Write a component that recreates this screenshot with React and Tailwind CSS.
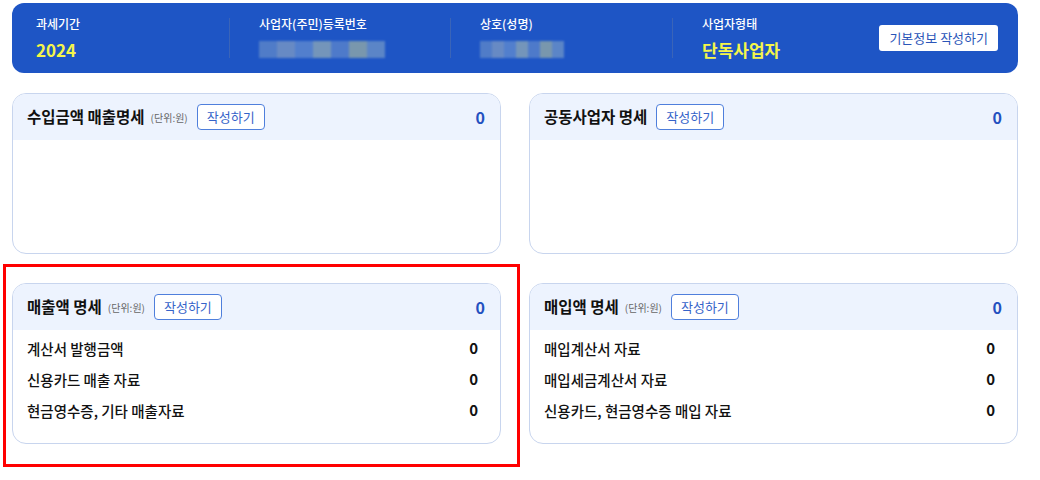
import React from "react";

const font = { fontFamily: '"Noto Sans CJK KR", "Noto Sans", sans-serif' };

const Blur = ({ w }) => (
  <div className={`flex h-[17px] ${w} opacity-80 blur-[1px]`}>
    <div className="flex-1 bg-[#5d86c9]" />
    <div className="flex-1 bg-[#7a98c4]" />
    <div className="flex-1 bg-[#5f8ad0]" />
    <div className="flex-1 bg-[#8aa6b8]" />
    <div className="flex-1 bg-[#5b84cc]" />
    <div className="flex-1 bg-[#90a8a8]" />
    <div className="flex-1 bg-[#6b91c8]" />
  </div>
);

const InfoCol = ({ label, children, w, first }) => (
  <div
    className={`flex h-[40px] shrink-0 flex-col justify-between ${w} ${
      first ? "pl-6" : "border-l border-[#3a64b8] pl-[29px]"
    }`}
  >
    <div className="text-[12px] font-medium leading-none text-white">{label}</div>
    {children}
  </div>
);

const Card = ({ title, unit, total, rows }) => (
  <div className="flex h-[161px] flex-col overflow-hidden rounded-[14px] border border-[#c8d5ee] bg-white">
    <div className="flex h-[46px] shrink-0 items-center bg-[#edf3fe] pl-[14px] pr-[15px]">
      <span className="text-[15.5px] font-bold text-[#111]">{title}</span>
      {unit && <span className="ml-[6px] text-[10px] text-[#666]">(단위:원)</span>}
      <button className="ml-[9px] h-[26px] whitespace-nowrap rounded-[4px] border border-[#4f7fdc] bg-white px-[9px] text-[13px] text-[#3563c9]">
        작성하기
      </button>
      <span className="ml-auto text-[16px] font-bold text-[#2350c0]">{total}</span>
    </div>
    {rows && (
      <div className="flex flex-col pt-[3px]">
        {rows.map((r) => (
          <div key={r} className="flex h-[31px] items-center justify-between pl-[14px] pr-[22px]">
            <span className="text-[14.5px] font-medium text-[#111]">{r}</span>
            <span className="text-[15px] font-bold text-[#111]">0</span>
          </div>
        ))}
      </div>
    )}
  </div>
);

export default function App() {
  return (
    <div className="min-h-[480px] w-[1040px] bg-white pl-3 pt-[3px]" style={font}>
      <div className="flex h-[70px] w-[1006px] items-center rounded-[12px] bg-[#1e55c5] pr-[20px]">
        <InfoCol label="과세기간" w="w-[217px]" first>
          <div className="text-[17px] font-bold leading-none text-[#f4f54a]">2024</div>
        </InfoCol>
        <InfoCol label="사업자(주민)등록번호" w="w-[221px]">
          <Blur w="w-[126px]" />
        </InfoCol>
        <InfoCol label="상호(성명)" w="w-[222px]">
          <Blur w="w-[84px]" />
        </InfoCol>
        <InfoCol label="사업자형태" w="w-[180px]">
          <div className="text-[17px] font-bold leading-none text-[#f4f54a]">단독사업자</div>
        </InfoCol>
        <button className="ml-auto h-[26px] whitespace-nowrap rounded-[3px] bg-white px-[10px] text-[13px] text-[#2a55b8]">
          기본정보 작성하기
        </button>
      </div>

      <div className="mt-[20px] grid w-[1006px] grid-cols-[489px_489px] gap-x-[28px] gap-y-[29px]">
        <Card title="수입금액 매출명세" unit total="0" />
        <Card title="공동사업자 명세" total="0" />
        <div className="relative">
          <Card
            title="매출액 명세"
            unit
            total="0"
            rows={["계산서 발행금액", "신용카드 매출 자료", "현금영수증, 기타 매출자료"]}
          />
          <div className="pointer-events-none absolute -bottom-[23px] -left-[9px] -right-[19px] -top-[19px] border-[3px] border-[#ff0000]" />
        </div>
        <Card
          title="매입액 명세"
          unit
          total="0"
          rows={["매입계산서 자료", "매입세금계산서 자료", "신용카드, 현금영수증 매입 자료"]}
        />
      </div>
    </div>
  );
}
